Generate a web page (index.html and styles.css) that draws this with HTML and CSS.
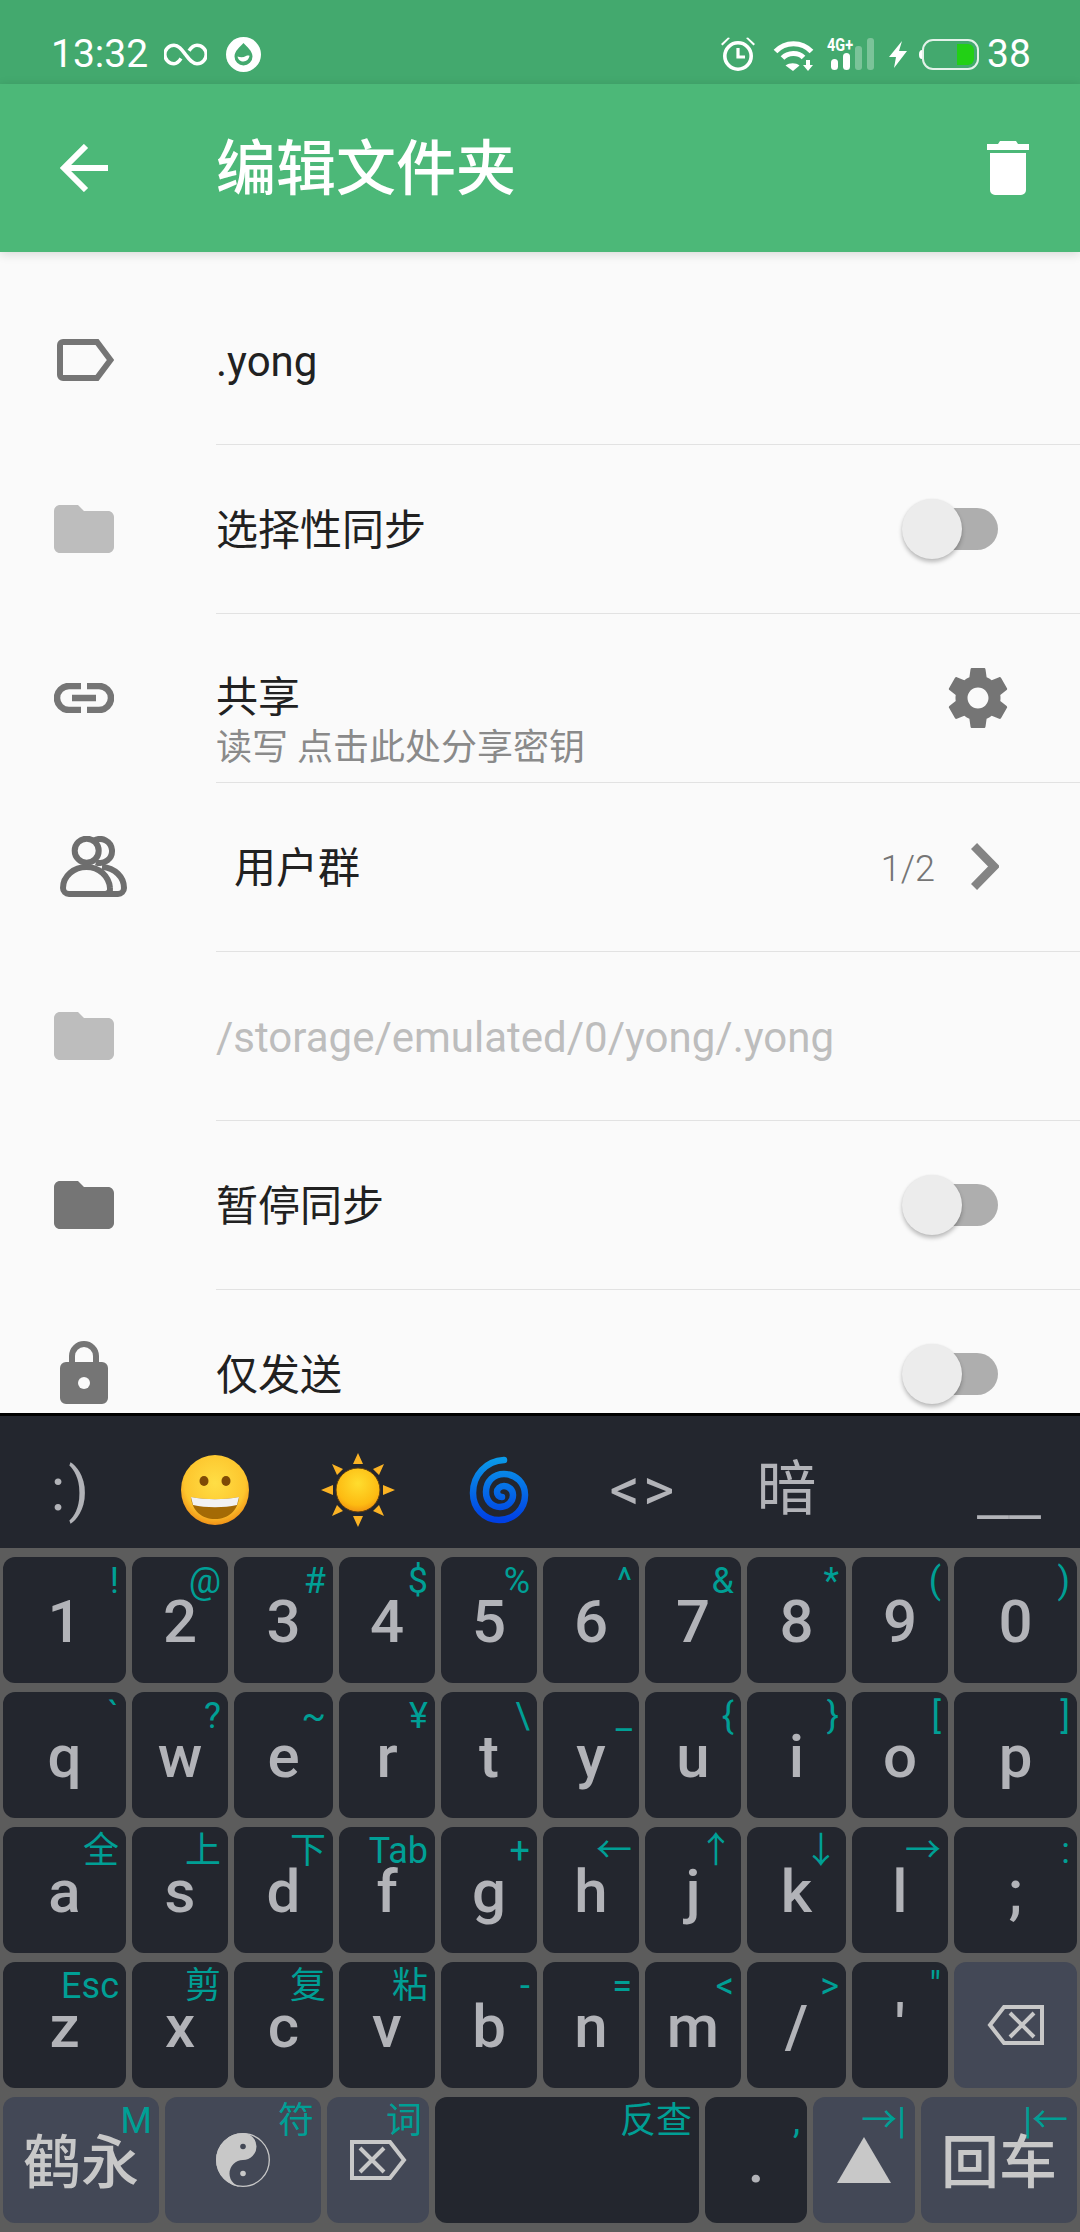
FILE: index.html
```html
<!DOCTYPE html>
<html lang="zh">
<head>
<meta charset="utf-8">
<title>编辑文件夹</title>
<link rel="stylesheet" href="styles.css">
</head>
<body>
<div class="app">
  <div class="status">
    <span class="clock">13:32</span>
    <svg class="st-inf" viewBox="0 0 43 23" width="43" height="23"><path d="M17 15.500C15 18.500 13 20.700 10 20.700a9.200 9.200 0 0 1 0-18.400c5 0 8 4.600 11.500 9.200s6.500 9.200 11.500 9.200a9.200 9.200 0 0 0 0-18.400c-3.500 0-6 2.500-8 5.500" fill="none" stroke="#fff" stroke-width="3.500"/></svg>
    <svg class="st-drop" viewBox="0 0 35 35" width="35" height="35"><circle cx="17.500" cy="17.500" r="17.500" fill="#fff"/><path d="M17.500 6C21 10 26.500 14 26.500 19.500a9 9 0 0 1-18 0C8.500 14 14 10 17.500 6Z" fill="#43a96e"/><path d="M11.500 19.500c3 1 6 1 8.500-.5 1.500-.8 3-.5 3.500-.2-.5 3.500-3 5.700-6 5.700s-5.500-2-6-5Z" fill="#fff"/></svg>
    <span class="st-space"></span>
    <svg class="st-alarm" viewBox="0 0 34 34" width="34" height="34"><circle cx="17" cy="19" r="13.200" fill="none" stroke="#fff" stroke-width="3.600"/><path d="M17 11v9h7" fill="none" stroke="#fff" stroke-width="3.200"/><path d="M0 7 7 0.500 9 1 1.500 8.500ZM34 7 27 0.500 25 1 32.500 8.500Z" fill="#fff"/></svg>
    <svg class="st-wifi" viewBox="0 0 41 33" width="41" height="33"><path d="M2.500 13.500C12 3 29 3 38.500 13.500" fill="none" stroke="#fff" stroke-width="5"/><path d="M9.500 20C15 14 25.500 14 30.500 19.500" fill="none" stroke="#fff" stroke-width="5"/><path d="M12.500 27.500C16.500 24.500 23 24.500 26.500 27.500L20 33Z" fill="#fff"/><path d="M33 22h4v5h3l-5 6-5-6h3Z" fill="#fff"/></svg>
    <svg class="st-signal" viewBox="0 0 47 33" width="47" height="33"><text x="0" y="13" class="net-label" textLength="26" lengthAdjust="spacingAndGlyphs">4G+</text><rect x="4" y="21" width="7" height="11" rx="3.500" fill="#fff"/><rect x="16" y="15" width="7" height="17" rx="3.500" fill="#fff"/><rect x="28" y="8" width="7" height="24" rx="3" fill="#fff" opacity=".3"/><rect x="40" y="0" width="7" height="32" rx="3" fill="#fff" opacity=".3"/></svg>
    <svg class="st-bolt" viewBox="0 0 18 27" width="18" height="27"><path d="M13 0 0 16h7L5 27 18 10h-8Z" fill="#fff"/></svg>
    <svg class="st-batt" viewBox="0 0 60 31" width="60" height="31"><rect x="4" y="1" width="55" height="29" rx="10" fill="none" stroke="#fff" stroke-opacity=".85" stroke-width="2"/><path d="M3 11a3 4.500 0 0 0 0 9Z" fill="#fff"/><path d="M38 5h11a6 6 0 0 1 6 6v9a6 6 0 0 1-6 6H38Z" fill="#22d015"/></svg>
    <span class="batt-num">38</span>
  </div>

  <header class="toolbar">
    <svg class="tb-back" viewBox="0 0 48 48" width="48" height="48"><path d="M48 24H5M26 2 4 24l22 22" fill="none" stroke="#fff" stroke-width="6"/></svg>
    <h1 class="tb-title">编辑文件夹</h1>
    <svg class="tb-trash" viewBox="0 0 42 54" width="42" height="54"><path d="M11 3 13 0h16l2 3h11v6H0V3ZM3 12h36v37a5 5 0 0 1-5 5H8a5 5 0 0 1-5-5Z" fill="#fff"/></svg>
  </header>

  <main class="list">
    <section class="row row-first">
      <div class="ico-cell"><svg viewBox="0 0 57 42" width="57" height="42"><path d="M6 3h34l13.500 18L40 39H6a3 3 0 0 1-3-3V6a3 3 0 0 1 3-3Z" fill="none" stroke="#757575" stroke-width="6"/></svg></div>
      <div class="body"><span class="label">.yong</span></div>
    </section>
    <section class="row">
      <div class="ico-cell"><svg viewBox="0 0 60 48" width="60" height="48"><path class="f-light" d="M24 0H6C2.700 0 0 2.700 0 6v36c0 3.300 2.700 6 6 6h48c3.300 0 6-2.700 6-6V12c0-3.300-2.700-6-6-6H30Z"/></svg></div>
      <div class="body"><span class="label grow">选择性同步</span><span class="switch"></span></div>
    </section>
    <section class="row">
      <div class="ico-cell"><svg viewBox="0 0 60 30" width="60" height="30"><path d="M27 3H15a12 12 0 0 0 0 24h12M33 3h12a12 12 0 0 1 0 24H33M18 15h24" fill="none" stroke="#757575" stroke-width="6.500"/></svg></div>
      <div class="body">
        <div class="stack grow"><span class="label">共享</span><span class="sub">读写 点击此处分享密钥</span></div>
        <svg class="gear" viewBox="0 0 24 24" width="72" height="72"><path fill="#757575" d="M19.430 12.980c.04-.32.07-.64.07-.98s-.03-.66-.07-.98l2.110-1.650c.19-.15.24-.42.12-.64l-2-3.460c-.12-.22-.39-.3-.61-.22l-2.490 1c-.52-.4-1.080-.73-1.690-.98l-.38-2.650C14.460 2.180 14.250 2 14 2h-4c-.25 0-.46.18-.49.42l-.38 2.650c-.61.25-1.170.59-1.690.98l-2.490-1c-.23-.09-.49 0-.61.22l-2 3.460c-.13.22-.07.49.12.64l2.110 1.650c-.04.32-.07.65-.07.98s.03.66.07.98l-2.110 1.650c-.19.15-.24.42-.12.64l2 3.460c.12.22.39.3.61.22l2.490-1c.52.4 1.080.73 1.690.98l.38 2.650c.03.24.24.42.49.42h4c.25 0 .46-.18.49-.42l.38-2.650c.61-.25 1.170-.59 1.690-.98l2.490 1c.23.09.49 0 .61-.22l2-3.460c.12-.22.07-.49-.12-.64l-2.110-1.650zM12 15.500c-1.930 0-3.500-1.570-3.500-3.500s1.570-3.500 3.500-3.500 3.500 1.570 3.500 3.500-1.570 3.500-3.500 3.500z"/></svg>
      </div>
    </section>
    <section class="row">
      <div class="ico-cell ico-people"><svg viewBox="0 0 67 62" width="67" height="62"><g fill="none" stroke="#6e6e6e" stroke-width="6"><circle cx="26.700" cy="14.700" r="12"/><path d="M34 4.600A12 12 0 1 1 36 26.300"/><path d="M9 58h36a5 5 0 0 0 5-6C49 40 39 31 26.500 31S3 40 3 52a6 6 0 0 0 6 6Z"/><path d="M45 58h13a6 6 0 0 0 6-6C64 41 55 32 42 31"/></g></svg></div>
      <div class="body"><span class="label label-indent grow">用户群</span><span class="count">1/2</span><svg class="chev" viewBox="0 0 28 47" width="28" height="47"><path d="M3 3l20 20.500L3 44" fill="none" stroke="#848484" stroke-width="8.500"/></svg></div>
    </section>
    <section class="row">
      <div class="ico-cell"><svg viewBox="0 0 60 48" width="60" height="48"><path class="f-light" d="M24 0H6C2.700 0 0 2.700 0 6v36c0 3.300 2.700 6 6 6h48c3.300 0 6-2.700 6-6V12c0-3.300-2.700-6-6-6H30Z"/></svg></div>
      <div class="body"><span class="label path">/storage/emulated/0/yong/.yong</span></div>
    </section>
    <section class="row">
      <div class="ico-cell"><svg viewBox="0 0 60 48" width="60" height="48"><path class="f-dark" d="M24 0H6C2.700 0 0 2.700 0 6v36c0 3.300 2.700 6 6 6h48c3.300 0 6-2.700 6-6V12c0-3.300-2.700-6-6-6H30Z"/></svg></div>
      <div class="body"><span class="label grow">暂停同步</span><span class="switch"></span></div>
    </section>
    <section class="row">
      <div class="ico-cell"><svg class="lock" viewBox="0 0 48 63" width="48" height="63"><path d="M9 21V15a15 15 0 0 1 30 0v6h3a6 6 0 0 1 6 6v30a6 6 0 0 1-6 6H6a6 6 0 0 1-6-6V27a6 6 0 0 1 6-6Zm6 0h18V15a9 9 0 0 0-18 0Z" fill="#757575"/><circle cx="24" cy="42" r="6" fill="#fafafa"/></svg></div>
      <div class="body"><span class="label grow">仅发送</span><span class="switch"></span></div>
    </section>
  </main>

  <div class="ime">
    <div class="suggest">
      <span class="sug sug-txt">:)</span>
      <span class="sug"><svg viewBox="0 0 70 72" width="70" height="72"><defs><radialGradient id="face" cx=".5" cy=".4" r=".62"><stop offset="0" stop-color="#ffde45"/><stop offset=".72" stop-color="#fdc62e"/><stop offset="1" stop-color="#ef8b14"/></radialGradient></defs><ellipse cx="35" cy="36" rx="34" ry="35" fill="url(#face)"/><ellipse cx="24" cy="27" rx="4.500" ry="5" fill="#7f4a05"/><ellipse cx="46" cy="27" rx="4.500" ry="5" fill="#7f4a05"/><path d="M11 43c15 3 33 3 48 0-1 14-11 22-24 22s-23-8-24-22Z" fill="#a46a05"/><path d="M11 43c15 3 33 3 48 0l-2 8c-13 3-31 3-44 0Z" fill="#f2f2f2"/></svg></span>
      <span class="sug"><svg viewBox="0 0 74 74" width="74" height="74"><defs><radialGradient id="sun" cx=".5" cy=".35" r=".7"><stop offset="0" stop-color="#ffdd2e"/><stop offset=".7" stop-color="#fdbb12"/><stop offset="1" stop-color="#ee8a10"/></radialGradient></defs><g fill="#fbb324"><path d="M37 0l5 11H32ZM37 74l-5-11h10ZM0 37l12-5v10ZM74 37l-12 5V32Z"/><path d="M11 11l11 5-6 6ZM63 11l-5 11-6-6ZM11 63l5-11 6 6ZM63 63l-11-5 6-6Z"/></g><circle cx="37" cy="37" r="22" fill="url(#sun)" stroke="#5e3d10" stroke-width="1"/></svg></span>
      <span class="sug sug-spin"><svg viewBox="0 0 60 68" width="60" height="68"><defs><linearGradient id="spin" x1="0" y1="0" x2="0" y2="1"><stop offset="0" stop-color="#0a98e8"/><stop offset="1" stop-color="#0040e4"/></linearGradient></defs><path d="M35 4C17 5 4 19 4 37c0 15 11 27 26 27s26-11 26-25c0-12-9-21-21-21-10 0-18 7-18 18 0 9 6 15 14 15s13-6 13-12c0-5-4-9-9-9-4 0-7 3-7 6 0 3 2 5 5 5" fill="none" stroke="url(#spin)" stroke-width="6.500" stroke-linecap="round"/></svg></span>
      <span class="sug sug-txt">&lt;&gt;</span>
      <span class="sug">暗</span>
      <span class="sug sug-last">__</span>
    </div>
    <div class="keys">
      <div class="kb-row">
        <div class="key"><span class="hint">!</span>1</div><div class="key"><span class="hint">@</span>2</div><div class="key"><span class="hint">#</span>3</div><div class="key"><span class="hint">$</span>4</div><div class="key"><span class="hint">%</span>5</div><div class="key"><span class="hint">^</span>6</div><div class="key"><span class="hint">&amp;</span>7</div><div class="key"><span class="hint">*</span>8</div><div class="key"><span class="hint">(</span>9</div><div class="key"><span class="hint">)</span>0</div>
      </div>
      <div class="kb-row">
        <div class="key"><span class="hint">`</span>q</div><div class="key"><span class="hint">?</span>w</div><div class="key"><span class="hint">~</span>e</div><div class="key"><span class="hint">¥</span>r</div><div class="key"><span class="hint">\</span>t</div><div class="key"><span class="hint">_</span>y</div><div class="key"><span class="hint">{</span>u</div><div class="key"><span class="hint">}</span>i</div><div class="key"><span class="hint">[</span>o</div><div class="key"><span class="hint">]</span>p</div>
      </div>
      <div class="kb-row">
        <div class="key"><span class="hint">全</span>a</div><div class="key"><span class="hint">上</span>s</div><div class="key"><span class="hint">下</span>d</div><div class="key"><span class="hint">Tab</span>f</div><div class="key"><span class="hint">+</span>g</div><div class="key"><span class="hint">←</span>h</div><div class="key"><span class="hint">↑</span>j</div><div class="key"><span class="hint">↓</span>k</div><div class="key"><span class="hint">→</span>l</div><div class="key"><span class="hint">:</span>;</div>
      </div>
      <div class="kb-row">
        <div class="key"><span class="hint">Esc</span>z</div><div class="key"><span class="hint">剪</span>x</div><div class="key"><span class="hint">复</span>c</div><div class="key"><span class="hint">粘</span>v</div><div class="key"><span class="hint">-</span>b</div><div class="key"><span class="hint">=</span>n</div><div class="key"><span class="hint">&lt;</span>m</div><div class="key"><span class="hint">&gt;</span>/</div><div class="key"><span class="hint">"</span>'</div>
        <div class="key fn"><svg viewBox="0 0 57 40" width="57" height="40"><path d="M17 2h38v36H17L3 20Z" fill="none" stroke="#c8c8c8" stroke-width="4"/><path d="M23 8l24 24M47 8 23 32" stroke="#c8c8c8" stroke-width="4"/></svg></div>
      </div>
      <div class="kb-row kb-bottom">
        <div class="key fn cjk"><span class="hint">M</span>鹤永</div>
        <div class="key fn"><span class="hint">符</span><svg viewBox="0 0 54 54" width="54" height="54"><circle cx="27" cy="27" r="26.300" fill="none" stroke="#c8c8c8" stroke-width="1.300"/><path d="M27 0A27 27 0 0 0 27 54 13.500 13.500 0 0 1 27 27 13.500 13.500 0 0 0 27 0Z" fill="#c8c8c8"/><circle cx="27" cy="13.500" r="2.800" fill="#434856"/><circle cx="27" cy="40.500" r="2.800" fill="#c8c8c8"/></svg></div>
        <div class="key fn"><span class="hint">词</span><svg viewBox="0 0 57 40" width="57" height="40"><path d="M2 2h38l14 18-14 18H2Z" fill="none" stroke="#c8c8c8" stroke-width="4"/><path d="M10 8l24 24M34 8 10 32" stroke="#c8c8c8" stroke-width="4"/></svg></div>
        <div class="key"><span class="hint">反查</span></div>
        <div class="key"><span class="hint">,</span>.</div>
        <div class="key fn"><span class="hint hint-wide">→|</span><svg viewBox="0 0 54 46" width="54" height="46"><path d="M27 0l27 46H0Z" fill="#c8c8c8"/></svg></div>
        <div class="key fn cjk"><span class="hint hint-wide">|←</span>回车</div>
      </div>
    </div>
  </div>
</div>
</body>
</html>
```

FILE: styles.css
```css
* { box-sizing: border-box; }
html, body { margin: 0; padding: 0; }
body { font-family: Roboto, "Noto Sans CJK SC", sans-serif; background: #fafafa; }
svg { display: block; flex: none; }

.app { width: 1080px; height: 2232px; display: flex; flex-direction: column; overflow: hidden; }

/* status bar */
.status { height: 84px; flex: none; background: #43a96e; display: flex; align-items: center; padding: 24px 51px 0 51px; color: #fff; }
.clock { font-size: 39px; line-height: 60px; width: 96px; }
.st-inf { margin-left: 17px; }
.st-drop { margin-left: 19px; }
.st-space { flex: 1; }
.st-wifi { margin-left: 18px; }
.st-signal { margin-left: 13px; overflow: visible; }
.net-label { font-family: Roboto, sans-serif; font-size: 18px; font-weight: 700; fill: #fff; }
.st-bolt { margin-left: 15px; }
.st-batt { margin-left: 12px; }
.batt-num { font-size: 39px; line-height: 60px; margin-left: 8px; width: 42px; }

/* toolbar */
.toolbar { height: 168px; flex: none; background: #4cb878; display: flex; align-items: center; padding: 0 51px 0 60px; position: relative; z-index: 2; box-shadow: 0 2px 10px rgba(0,0,0,.14); }
.tb-back { margin-right: 108px; }
.tb-title { flex: 1; margin: 0; padding-top: 3px; color: #fff; font-size: 60px; font-weight: 500; line-height: 80px; }

/* list */
.list { flex: 1; min-height: 0; overflow: hidden; background: #fafafa; }
.row { height: 169px; display: flex; }
.row-first { height: 192.500px; }
.row-first .ico-cell { padding-top: 23px; padding-left: 57px; }
.row-first .body { padding-top: 25px; }
.ico-cell { width: 216px; flex: none; display: flex; align-items: center; padding-left: 54px; }
.ico-people { padding-left: 60px; }
.row:last-child .ico-cell { padding-left: 60px; }
.lock { margin-bottom: 3px; }
.body { flex: 1; display: flex; align-items: center; border-bottom: 1.500px solid #e2e2e2; }
.grow { flex: 1; }
.label { font-size: 42px; color: #212121; line-height: 50px; padding-top: 4px; }
.label-indent { padding-left: 18px; }
.path { color: #bdbdbd; }
.f-light { fill: #bdbdbd; }
.f-dark { fill: #757575; }
.stack { display: flex; flex-direction: column; align-self: flex-start; padding-top: 59px; }
.stack .label { padding-top: 0; }
.sub { font-size: 36px; color: #8a8a8a; line-height: 50px; }
.gear { margin-right: 66px; }
.count { font-size: 36px; color: #757575; font-weight: 300; padding-top: 4px; }
.chev { margin-left: 36px; margin-right: 81px; }

.switch { width: 96px; height: 60px; margin-right: 82px; position: relative; flex: none; }
.switch::before { content: ""; position: absolute; right: 0; top: 9px; width: 84px; height: 42px; border-radius: 21px; background: #aeaeae; }
.switch::after { content: ""; position: absolute; left: 0; top: 0; width: 60px; height: 60px; border-radius: 50%; background: #ececec; box-shadow: 0 3px 4px rgba(0,0,0,.25), 0 0 2px rgba(0,0,0,.06); }

/* keyboard */
.ime { flex: none; height: 819px; border-top: 3px solid #000; background: #5c5c5c; }
.suggest { height: 132px; background: #23262e; display: flex; color: #b2b3b8; font-size: 60px; }
.sug { width: 143px; flex: none; display: flex; align-items: center; justify-content: center; line-height: 1; padding-top: 16px; }
.sug-txt { letter-spacing: 3px; }
.sug-spin { padding-right: 3px; }
.sug-last { flex: 1; width: auto; justify-content: flex-end; padding-right: 39px; font-size: 74px; font-weight: 300; }
.keys { padding: 9px 3px; display: flex; flex-direction: column; gap: 9px; }
.kb-row { display: grid; grid-template-columns: 123px 96px 99px 96px 96px 96px 96px 99px 96px 123px; gap: 6px; }
.kb-bottom { grid-template-columns: 156px 156px 102px 264px 102px 102px 156px; }
.key { height: 126px; border-radius: 12px; background: #23262e; color: #b2b3b8; font-size: 60px; line-height: 1; display: flex; align-items: center; justify-content: center; position: relative; font-weight: 500; padding-top: 3px; }
.key svg { margin-top: -3px; }
.fn { background: #434856; color: #c8c8c8; }
.cjk { font-size: 58px; font-weight: 500; padding-top: 5px; }
.hint { position: absolute; top: 6px; right: 7px; font-size: 36px; line-height: 36px; font-weight: 400; color: #009f95; }
.hint-wide { right: 9px; }
```
